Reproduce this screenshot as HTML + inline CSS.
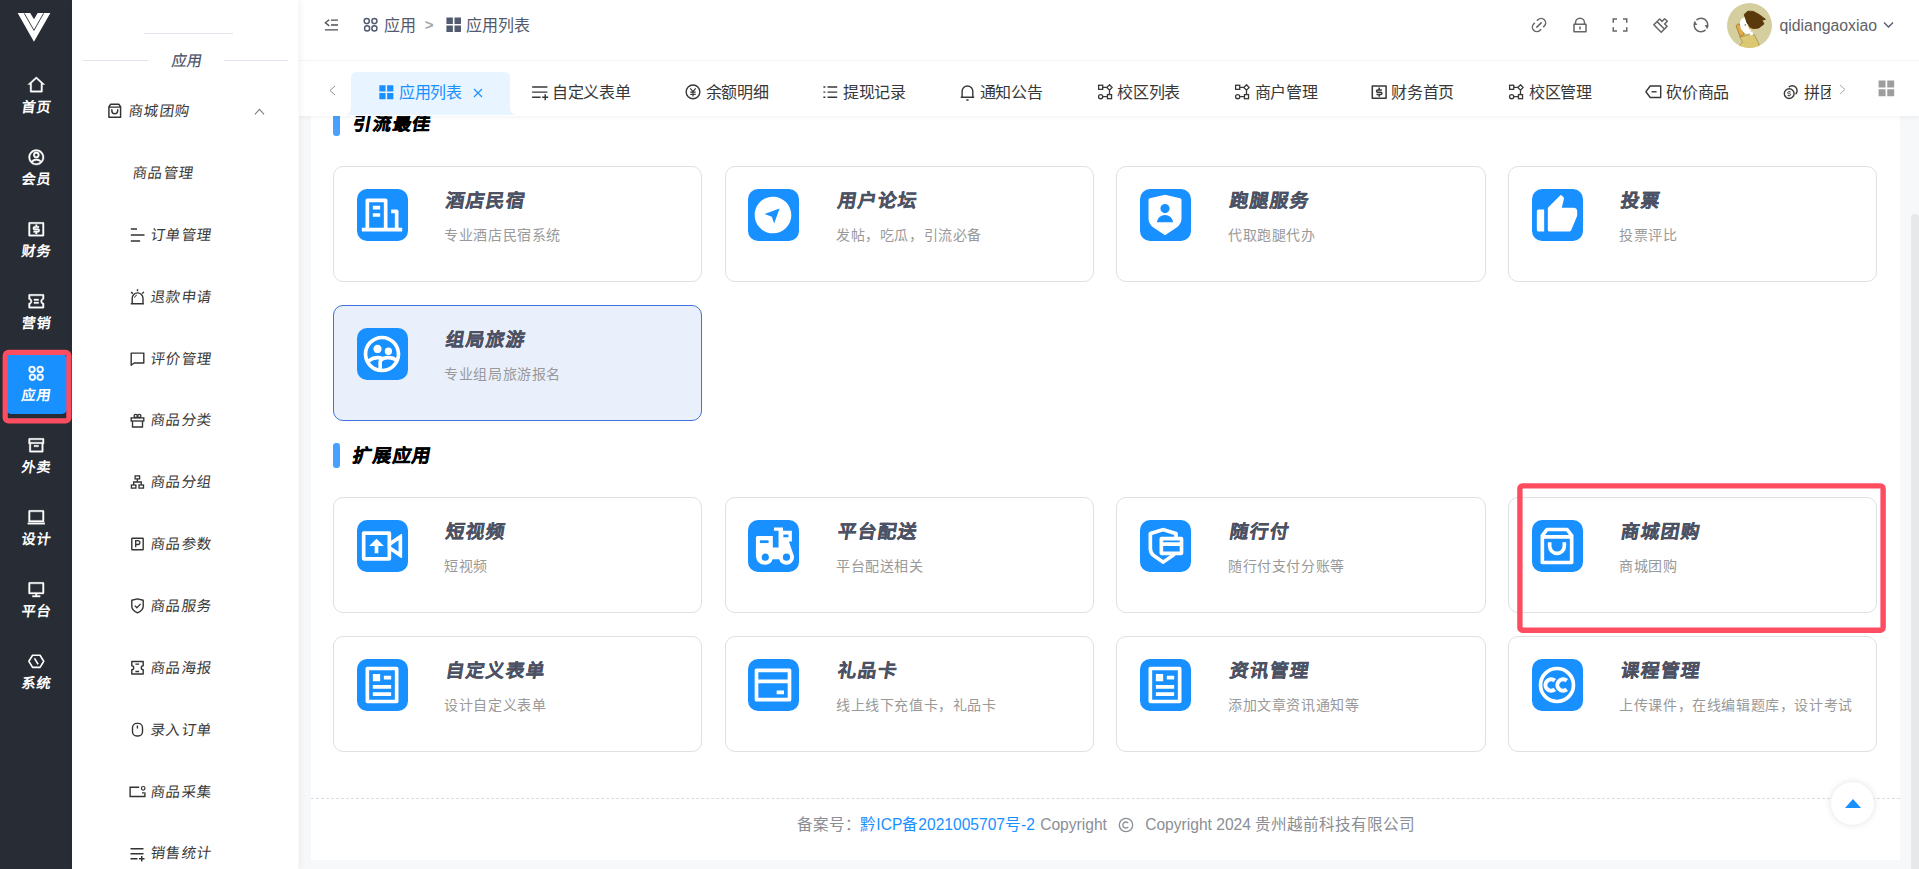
<!DOCTYPE html>
<html lang="zh-CN"><head><meta charset="utf-8"><title>应用列表</title>
<style>
*{box-sizing:border-box;margin:0;padding:0}
html,body{width:1919px;height:869px;overflow:hidden}
body{font-family:"Liberation Sans",sans-serif;background:#f6f8f9;position:relative;color:#333;font-size:14px}
.abs{position:absolute}
svg{display:block;position:absolute}
#col{position:absolute;left:0;top:0;width:72px;height:869px;background:#282c34}
.ci{position:absolute;left:0;width:72px;text-align:center;letter-spacing:1.1px;text-indent:1.1px;color:#fff;font-weight:bold;transform:skewX(-8deg);font-size:14px;line-height:16px;white-space:nowrap}
#side{position:absolute;left:72px;top:0;width:227px;height:869px;background:#fff;border-right:1px solid #f7f8f9;z-index:7;box-shadow:1px 0 7px rgba(0,21,41,.06)}
.mi{position:absolute;font-size:14.5px;transform:skewX(-8deg);letter-spacing:1.2px;color:#3a3a3a;line-height:16px;white-space:nowrap;font-weight:300}
#head{z-index:6;position:absolute;left:298px;top:0;width:1621px;height:61px;background:#fff;border-bottom:1px solid #f3f3f3}
#tabs{z-index:5;position:absolute;left:298px;top:61px;width:1621px;height:55px;background:#fff;box-shadow:0 1px 5px rgba(0,21,41,.06)}
.t16{position:absolute;font-size:16px;line-height:20px;white-space:nowrap}
#panel{overflow:hidden;position:absolute;left:311px;top:115px;width:1589px;height:745px;background:#fff}
.card{position:absolute;width:369px;height:116px;border:1px solid #dee0e6;border-radius:10px;background:#fff}
.card.hov{background:#eaf0fb;border-color:#3f72dc}
.ib{position:absolute;left:23px;top:22px;width:51px;height:52px;border-radius:10px;background:#1890ff}
.ct{position:absolute;left:112px;top:21px;font-size:18.5px;line-height:26px;font-weight:900;transform:skewX(-9deg);transform-origin:0 50%;-webkit-text-stroke:.35px #4c5264;color:#4c5264;white-space:nowrap;letter-spacing:1.1px}
.cd{position:absolute;left:110.3px;top:58px;font-size:14px;letter-spacing:.6px;line-height:20px;color:#999;white-space:nowrap}
.st{position:absolute;font-size:18.3px;line-height:26px;font-weight:900;transform:skewX(-10deg);transform-origin:0 50%;-webkit-text-stroke:.45px #000;color:#000;white-space:nowrap;letter-spacing:1.8px}
.bar{position:absolute;width:7px;height:25px;border-radius:3px;background:#49a0ff}
</style></head><body>
<div id="col">
<svg viewBox="0 0 72 50" width="72" height="50" style="left:0;top:0"><path d="M17.66 13 L30.19 13 L33.96 19.23 L37.69 13 L50.37 13 L33.96 41.75 Z" fill="#fff"/><path d="M24.23 13.3 L33.96 30.36 L43.64 13.3" fill="none" stroke="#282c34" stroke-width="0.9"/></svg>
<svg viewBox="0 0 24 24" width="18.6" height="18.6" fill="#fff" style="stroke:#fff;stroke-width:.45;left:26.700px;top:75.8px"><path d="M19 21H5a1 1 0 0 1-1-1v-9H1l10.327-9.388a1 1 0 0 1 1.346 0L23 11h-3v9a1 1 0 0 1-1 1zM6 19h12V9.157l-6-5.454-6 5.454V19z"/></svg>
<div class="ci" style="top:98.8px">首页</div>
<svg viewBox="0 0 24 24" width="18.6" height="18.6" fill="#fff" style="stroke:#fff;stroke-width:.45;left:26.700px;top:147.8px"><path d="M12 22C6.477 22 2 17.523 2 12S6.477 2 12 2s10 4.477 10 10-4.477 10-10 10zm-4.987-3.744A7.966 7.966 0 0 0 12 20c1.970 0 3.773-.712 5.167-1.892A6.979 6.979 0 0 0 12.160 16a6.981 6.981 0 0 0-5.147 2.256zM5.616 16.820A8.975 8.975 0 0 1 12.160 14a8.972 8.972 0 0 1 6.362 2.634 8 8 0 1 0-12.906.187zM12 13a4 4 0 1 1 0-8 4 4 0 0 1 0 8zm0-2a2 2 0 1 0 0-4 2 2 0 0 0 0 4z"/></svg>
<div class="ci" style="top:170.8px">会员</div>
<svg viewBox="0 0 24 24" width="18.6" height="18.6" fill="#fff" style="stroke:#fff;stroke-width:.45;left:26.700px;top:219.8px"><path d="M3 3h18a1 1 0 0 1 1 1v16a1 1 0 0 1-1 1H3a1 1 0 0 1-1-1V4a1 1 0 0 1 1-1zm1 2v14h16V5H4zm4.500 9H14a.5.5 0 1 0 0-1h-4a2.500 2.500 0 1 1 0-5h1V6h2v2h2.500v2H10a.5.5 0 1 0 0 1h4a2.500 2.500 0 1 1 0 5h-1v2h-2v-2H8.500v-2z"/></svg>
<div class="ci" style="top:242.8px">财务</div>
<svg viewBox="0 0 24 24" width="18.6" height="18.6" fill="#fff" style="stroke:#fff;stroke-width:.45;left:26.700px;top:291.8px"><path d="M2 9.500V4a1 1 0 0 1 1-1h18a1 1 0 0 1 1 1v5.500a2.500 2.500 0 1 0 0 5V20a1 1 0 0 1-1 1H3a1 1 0 0 1-1-1v-5.500a2.500 2.500 0 1 0 0-5zm2-1.532a4.500 4.500 0 0 1 0 8.064V19h16v-2.968a4.500 4.500 0 0 1 0-8.064V5H4v2.968zM9 9h6v2H9V9zm0 4h6v2H9v-2z"/></svg>
<div class="ci" style="top:314.8px">营销</div>
<div class="abs" style="left:6px;top:354px;width:60.5px;height:60px;background:#1890ff;border-radius:5px"></div>
<svg viewBox="0 0 24 24" width="18.6" height="18.6" fill="#fff" style="stroke:#fff;stroke-width:.45;left:26.700px;top:363.8px"><path d="M6.500 11.500a4.500 4.500 0 1 1 0-9 4.500 4.500 0 0 1 0 9zm.5 10a4.500 4.500 0 1 1 0-9 4.500 4.500 0 0 1 0 9zm10-10a4.500 4.500 0 1 1 0-9 4.500 4.500 0 0 1 0 9zm0 10a4.500 4.500 0 1 1 0-9 4.500 4.500 0 0 1 0 9zM6.500 9.500a2.500 2.500 0 1 0 0-5 2.500 2.500 0 0 0 0 5zm.5 10a2.500 2.500 0 1 0 0-5 2.500 2.500 0 0 0 0 5zm10-10a2.500 2.500 0 1 0 0-5 2.500 2.500 0 0 0 0 5zm0 10a2.500 2.500 0 1 0 0-5 2.500 2.500 0 0 0 0 5z"/></svg>
<div class="ci" style="top:386.8px">应用</div>
<svg viewBox="0 0 24 24" width="18.6" height="18.6" fill="#fff" style="stroke:#fff;stroke-width:.45;left:26.700px;top:435.8px"><path d="M3 10H2V4.003C2 3.449 2.455 3 2.992 3h18.016A.99.99 0 0 1 22 4.003V10h-1v10.001a.996.996 0 0 1-.993.999H3.993A.996.996 0 0 1 3 20.001V10zm16 0H5v9h14v-9zM4 5v3h16V5H4zm5 7h6v2H9v-2z"/></svg>
<div class="ci" style="top:458.8px">外卖</div>
<svg viewBox="0 0 24 24" width="18.6" height="18.6" fill="#fff" style="stroke:#fff;stroke-width:.45;left:26.700px;top:507.8px"><path d="M4 5v11h16V5H4zm-2-.993C2 3.451 2.455 3 2.992 3h18.016c.548 0 .992.449.992 1.007V18H2V4.007zM1 19h22v2H1v-2z"/></svg>
<div class="ci" style="top:530.8px">设计</div>
<svg viewBox="0 0 24 24" width="18.6" height="18.6" fill="#fff" style="stroke:#fff;stroke-width:.45;left:26.700px;top:579.8px"><path d="M4 16h16V5H4v11zm9 2v2h4v2H7v-2h4v-2H2.992A.998.998 0 0 1 2 16.993V4.007C2 3.451 2.455 3 2.992 3h18.016c.548 0 .992.449.992 1.007v12.986c0 .556-.455 1.007-.992 1.007H13z"/></svg>
<div class="ci" style="top:602.8px">平台</div>
<svg viewBox="0 0 24 24" width="18.6" height="18.6" fill="#fff" style="stroke:#fff;stroke-width:.45;left:26.700px;top:651.8px"><path d="M7.2 4.2h9.6L21.6 12l-4.8 7.800H7.200L2.400 12z" fill="none" stroke="#fff" stroke-width="2.1" stroke-linejoin="round"/><path d="M9.700 8.200l4.600 7.600" stroke="#fff" stroke-width="2.100" fill="none"/></svg>
<div class="ci" style="top:674.8px">系统</div>
<svg viewBox="0 340 80 90" width="80" height="90" style="left:0;top:340px"><rect x="5.200" y="352.400" width="63.700" height="68.400" rx="3.300" fill="none" stroke="#fe4c61" stroke-width="5.200"/></svg>
</div>
<div id="side">
<div class="abs" style="left:71.5px;top:33px;width:89.5px;height:1px;background:#dfe4ed"></div>
<div class="abs" style="left:11px;top:60px;width:65px;height:1px;background:#dfe4ed"></div>
<div class="abs" style="left:152px;top:60px;width:64px;height:1px;background:#dfe4ed"></div>
<div class="abs" style="left:76.500px;top:50.900px;width:76px;text-align:center;font-size:15px;line-height:20px;transform:skewX(-10deg);color:#465066;-webkit-text-stroke:.2px #465066;letter-spacing:.5px">应用</div>
<svg viewBox="0 0 24 24" width="17.5" height="17.5" fill="#333" style="left:34.15px;top:102.15px"><path d="M6.500 2h11a1 1 0 0 1 .8.400L21 6v15a1 1 0 0 1-1 1H4a1 1 0 0 1-1-1V6l2.700-3.600a1 1 0 0 1 .8-.400zM19 8H5v12h14V8zm-.5-2L17 4H7L5.500 6h13zM9 10v2a3 3 0 0 0 6 0v-2h2v2a5 5 0 0 1-10 0v-2h2z"/></svg>
<svg viewBox="128 226 20 18" width="20" height="18" fill="none" stroke="#333" stroke-width="1.5" style="left:56px;top:226px"><path d="M130.800 229H137M130.800 234.900H144.500M130.800 240.900H140.100"/></svg>
<svg viewBox="128 287 20 20" width="20" height="20" fill="none" stroke="#333" stroke-width="1.4" style="left:56px;top:287px"><path d="M132.200 303.700V298.300a5.400 5.400 0 0 1 10.800 0V303.700M130.800 303.700H143.900M137.500 289.200V291.300M131.100 292.100L132.900 293.600M143.900 292.100L142.200 293.600"/><path d="M134.600 297.600a3 3 0 0 1 2.200-2.500" stroke-width="1"/></svg>
<svg viewBox="128 350 20 18" width="20" height="18" fill="none" stroke="#333" stroke-width="1.4" style="left:56px;top:350px"><path d="M131.200 353.100H143.800V363H134.200L131.200 365.300Z" stroke-linejoin="round"/></svg>
<svg viewBox="128 412 20 18" width="20" height="18" fill="none" stroke="#333" stroke-width="1.35" style="left:56px;top:412px"><rect x="131.200" y="417.900" width="12.600" height="3.100"/><path d="M132.500 421V427H142.500V421"/><circle cx="135.700" cy="415.900" r="1.600"/><circle cx="139.300" cy="415.900" r="1.600"/></svg>
<svg viewBox="128 473 20 18" width="20" height="18" fill="none" stroke="#333" stroke-width="1.3" style="left:56px;top:473px"><rect x="135.100" y="475.900" width="4.500" height="3"/><rect x="131.400" y="485" width="4.500" height="3.100"/><rect x="139" y="485" width="4.500" height="3.100"/><path d="M137.350 479V482M133.650 485V482H141.250V485"/></svg>
<svg viewBox="128 535 20 18" width="20" height="18" fill="none" stroke="#333" stroke-width="1.4" style="left:56px;top:535px"><rect x="131.800" y="538.200" width="11.400" height="11.600" rx=".6"/><path d="M135.700 547.300V540.700H138a1.900 1.900 0 0 1 0 3.800H135.700" stroke-width="1.300"/></svg>
<svg viewBox="128 596 20 20" width="20" height="20" fill="none" stroke="#333" stroke-width="1.4" style="left:56px;top:596px"><path d="M137.500 598.900L143.200 600.300V606.500C143.200 609.400 141 611.200 137.500 612.900C134 611.200 131.800 609.400 131.800 606.500V600.300Z" stroke-linejoin="round"/><path d="M134.800 605.600L136.900 607.700L140.600 603.900" stroke-width="1.300"/></svg>
<svg viewBox="128 658 20 20" width="20" height="20" fill="none" stroke="#333" stroke-width="1.4" style="left:56px;top:658px"><path d="M131.800 661.500H143.200V665.800a1.900 1.900 0 0 0 0 3.800V674H131.800V669.600a1.900 1.900 0 0 0 0-3.800Z" stroke-linejoin="round"/><path d="M135.400 664.100H139.100M135.400 671.500H139.100" stroke-width="1.300"/></svg>
<svg viewBox="128 720 20 20" width="20" height="20" fill="none" stroke="#333" stroke-width="1.4" style="left:56px;top:720px"><rect x="132.500" y="723.400" width="10" height="12.600" rx="4.300"/><path d="M137.400 725.500V728.500"/></svg>
<svg viewBox="127 783 22 18" width="22" height="18" fill="none" stroke="#333" stroke-width="1.4" style="left:55px;top:783px"><path d="M139.200 787.200H130.100V796.500H144.900V792.300M142 792.900H144"/><circle cx="143.200" cy="788.300" r="1.800" stroke-width="1.200"/></svg>
<svg viewBox="128 844 22 20" width="22" height="20" fill="none" stroke="#333" stroke-width="1.45" style="left:56px;top:844px"><path d="M130.500 848.700H143.500M130.500 853.700H143.500M130.500 858.700H137.500M139 858.700H144.500M141.750 856V861.400"/></svg>
<div class="mi" style="left:57.1px;top:103.2px">商城团购</div>
<div class="mi" style="left:60.8px;top:165.1px">商品管理</div>
<div class="mi" style="left:79.3px;top:226.9px">订单管理</div>
<div class="mi" style="left:79.3px;top:288.8px">退款申请</div>
<div class="mi" style="left:79.3px;top:350.6px">评价管理</div>
<div class="mi" style="left:79.3px;top:412.4px">商品分类</div>
<div class="mi" style="left:79.3px;top:474.3px">商品分组</div>
<div class="mi" style="left:79.3px;top:536.1px">商品参数</div>
<div class="mi" style="left:79.3px;top:598.0px">商品服务</div>
<div class="mi" style="left:79.3px;top:659.8px">商品海报</div>
<div class="mi" style="left:79.3px;top:721.7px">录入订单</div>
<div class="mi" style="left:79.3px;top:783.5px">商品采集</div>
<div class="mi" style="left:79.3px;top:845.4px">销售统计</div>
<svg viewBox="0 0 12 8" width="11" height="7.3" fill="none" stroke="#7a7a7a" stroke-width="1.1" style="left:181.700px;top:108px"><path d="M1 7L6 1.500 11 7"/></svg>
</div>
<div id="head">
<svg viewBox="0 0 18 16" width="16" height="14" fill="none" stroke="#4d4f55" stroke-width="1.5" style="left:24.500px;top:18px"><path d="M9 2.500h8M9 8h8M2 13.500h15M7 2L2.500 5.500 7 9"/></svg>
<svg viewBox="0 0 24 24" width="17.5" height="17.5" fill="#515a6e" style="left:64px;top:16.300px"><path d="M6.500 11.500a4.500 4.500 0 1 1 0-9 4.500 4.500 0 0 1 0 9zm.5 10a4.500 4.500 0 1 1 0-9 4.500 4.500 0 0 1 0 9zm10-10a4.500 4.500 0 1 1 0-9 4.500 4.500 0 0 1 0 9zm0 10a4.500 4.500 0 1 1 0-9 4.500 4.500 0 0 1 0 9zM6.500 9.500a2.500 2.500 0 1 0 0-5 2.500 2.500 0 0 0 0 5zm.5 10a2.500 2.500 0 1 0 0-5 2.500 2.500 0 0 0 0 5zm10-10a2.500 2.500 0 1 0 0-5 2.500 2.500 0 0 0 0 5zm0 10a2.500 2.500 0 1 0 0-5 2.500 2.500 0 0 0 0 5z"/></svg>
<div class="t16" style="left:86px;top:15.5px;color:#515a6e">应用</div>
<div class="t16" style="left:126.800px;top:15.300px;color:#a3a6ad;font-weight:bold;font-size:15px">&gt;</div>
<svg viewBox="0 0 24 24" width="19.4" height="19.4" fill="#515a6e" style="left:145.600px;top:15.300px"><path d="M3 3h8v8H3V3zm0 10h8v8H3v-8zM13 3h8v8h-8V3zm0 10h8v8h-8v-8z"/></svg>
<div class="t16" style="left:167.500px;top:15.5px;color:#515a6e">应用列表</div>
<svg viewBox="0 0 24 24" width="18" height="18" fill="#666" style="left:1232.4px;top:16.0px"><path d="M18.364 15.536L16.950 14.120l1.414-1.414a5 5 0 1 0-7.071-7.071L9.879 7.050 8.464 5.636 9.880 4.222a7 7 0 0 1 9.900 9.900l-1.415 1.414zm-2.828 2.828l-1.415 1.414a7 7 0 0 1-9.900-9.900l1.415-1.414L7.050 9.880l-1.414 1.414a5 5 0 1 0 7.071 7.071l1.414-1.414 1.415 1.414zm-.708-10.607l1.415 1.415-7.071 7.070-1.415-1.414 7.071-7.070z"/></svg>
<svg viewBox="0 0 24 24" width="18" height="18" fill="#666" style="left:1273.0px;top:16.0px"><path d="M19 10h1a1 1 0 0 1 1 1v10a1 1 0 0 1-1 1H4a1 1 0 0 1-1-1V11a1 1 0 0 1 1-1h1V9a7 7 0 1 1 14 0v1zM5 12v8h14v-8H5zm6 2h2v4h-2v-4zm6-4V9A5 5 0 0 0 7 9v1h10z"/></svg>
<svg viewBox="0 0 24 24" width="18" height="18" fill="#666" style="left:1313.4px;top:16.1px"><path d="M20 3h2v6h-2V5h-4V3h4zM4 3h4v2H4v4H2V3h2zm16 16v-4h2v6h-6v-2h4zM4 19h4v2H2v-6h2v4z"/></svg>
<svg viewBox="0 0 24 24" width="18" height="18" fill="#666" style="left:1353.7px;top:16.2px"><path d="M16.536 15.950l2.120-2.122-3.180-3.182 3.535-3.535-2.120-2.121-3.536 3.535-3.182-3.182L8.050 7.464l8.486 8.486zm-1.415 1.414L6.636 8.879l-2.828 2.828 8.485 8.485 2.828-2.828zM13.354 5.697l2.828-2.829a1 1 0 0 1 1.414 0l3.536 3.536a1 1 0 0 1 0 1.414l-2.829 2.828 2.475 2.475a1 1 0 0 1 0 1.415L13 22.314a1 1 0 0 1-1.414 0l-9.900-9.900a1 1 0 0 1 0-1.414l7.778-7.778a1 1 0 0 1 1.415 0l2.475 2.475z"/></svg>
<svg viewBox="0 0 24 24" width="18" height="18" fill="#666" style="left:1394.2px;top:16.0px"><path d="M5.463 4.433A9.961 9.961 0 0 1 12 2c5.523 0 10 4.477 10 10 0 2.136-.670 4.116-1.810 5.740L17 12h3A8 8 0 0 0 6.460 6.228l-.997-1.795zm13.074 15.134A9.961 9.961 0 0 1 12 22C6.477 22 2 17.523 2 12c0-2.136.670-4.116 1.810-5.740L7 12H4a8 8 0 0 0 13.540 5.772l.997 1.795z"/></svg>
<svg viewBox="0 0 45 45" width="45" height="45" style="left:1429.2px;top:2.900px"><defs><clipPath id="av"><circle cx="22.5" cy="22.500" r="22.500"/></clipPath></defs><g clip-path="url(#av)"><rect width="45" height="45" fill="#d5cf9f"/><path d="M12.600 34.200L21.500 31.800 27.500 31.800 32.300 42 30 46 12 46 12.600 42.600 15.600 39z" fill="#dcc873" stroke="#8a6a1c" stroke-width=".5"/><path d="M9 22.800Q10.500 20.500 12.600 21L17.300 31.200 13.200 33.600z" fill="#e0ac4a" stroke="#8a5a14" stroke-width=".6"/><ellipse cx="18.600" cy="22.800" rx="5.400" ry="8.200" transform="rotate(-18 18.600 22.800)" fill="#fff"/><path d="M21 23l5 2.800-3.500.700z" fill="#d9a441"/><path d="M22.100 29.400l3.300-.8.800 3.200-2.800 .900z" fill="#fff"/><path d="M17.200 11.400L20.900 8.200 26.300 8.400 32.300 11.700 38.400 16.300 35 17.200 36.900 21 31.700 25 26.300 25.600 22.600 23.800 19.900 19.500 18.400 14.800z" fill="#5a3a0c" stroke="#5a3a0c" stroke-width="1" stroke-linejoin="round"/><circle cx="18.300" cy="21.900" r=".7" fill="#5a3a0c"/></g></svg>
<div class="t16" style="left:1481.500px;top:15.500px;color:#606266;font-size:15.800px">qidiangaoxiao</div>
<svg viewBox="0 0 11 8" width="11" height="8" fill="none" stroke="#515a6e" stroke-width="1.3" style="left:1584.700px;top:20.700px"><path d="M1 1.500l4.500 4.500L10 1.500"/></svg>
</div>
<div id="tabs">
<svg viewBox="0 0 7 11" width="7" height="11" fill="none" stroke="#8a8f99" stroke-width="1" style="left:31px;top:24px"><path d="M6 1L1 5.500 6 10"/></svg>
<svg viewBox="0 0 173 43" width="173" height="43" style="left:46.200px;top:11px;overflow:visible"><path d="M-.5 43 C4.500 43 7 40 7 34 L7 6 Q7 0 13 0 L160 0 Q166 0 166 6 L166 34 C166 40 168.500 43 173.500 43 Z" fill="#e8f4ff"/></svg>
<svg viewBox="0 0 24 24" width="18.7" height="18.7" fill="#1890ff" style="left:79.200px;top:21.700px"><path d="M3 3h8v8H3V3zm0 10h8v8H3v-8zM13 3h8v8h-8V3zm0 10h8v8h-8v-8z"/></svg>
<div class="t16" style="left:101.100px;top:21.500px;color:#1890ff;letter-spacing:-.3px">应用列表</div>
<svg viewBox="0 0 10 10" width="10" height="10" fill="none" stroke="#1890ff" stroke-width="1.1" style="left:174.700px;top:26.800px"><path d="M1 1l8 8M9 1L1 9"/></svg>
<svg viewBox="530 83 20 20" width="20" height="20" fill="none" stroke="#383838" stroke-width="1.45" style="left:232px;top:22px"><path d="M532.100 86.900H547.400M532.100 92.100H547.400M532.100 97.300H540.600M542.200 97.300H548.200M545.200 94.300V100.300"/></svg>
<svg viewBox="683 82 20 20" width="20" height="20" fill="none" stroke="#383838" stroke-width="1.4" style="left:385px;top:21px"><circle cx="693" cy="91.900" r="6.850"/><path d="M690.300 88.300L693 91.700L695.700 88.300M690.300 92.100H695.700M690.300 94.300H695.700M693 91.700V96.600" stroke-width="1.150"/></svg>
<svg viewBox="821 83 20 20" width="20" height="20" fill="none" stroke="#383838" stroke-width="1.45" style="left:523px;top:22px"><path d="M827.500 86.900H837.200M827.500 92.100H837.200M827.500 97.200H837.200M823.400 86.900H825.400M823.400 92.100H825.400M823.400 97.200H825.400"/></svg>
<svg viewBox="958 82 20 20" width="20" height="20" fill="none" stroke="#383838" stroke-width="1.4" style="left:660px;top:21px"><path d="M962.100 97.300V91.300a5.350 5.350 0 0 1 10.700 0V97.300M960.700 97.300H974.200M966.300 100H968.600"/></svg>
<svg viewBox="1096.8 84.1 16 16" width="16" height="16" fill="none" stroke="#383838" stroke-width="1.3" style="left:798.8px;top:23.1px"><rect x="1098.4" y="85.35" width="4.100" height="4.100"/><path d="M1109.3 84.9l2.700 2.700-2.700 2.700-2.700-2.700z"/><circle cx="1100.45" cy="96.75" r="2.100"/><rect x="1107.25" y="94.7" width="4.100" height="4.100"/><path d="M1102.5 87.4H1106.6M1102.55 96.75H1107.25M1109.3 90.3V94.7"/></svg>
<svg viewBox="1234 84.1 16 16" width="16" height="16" fill="none" stroke="#383838" stroke-width="1.3" style="left:936px;top:23.1px"><rect x="1235.6" y="85.35" width="4.100" height="4.100"/><path d="M1246.5 84.9l2.700 2.700-2.700 2.700-2.700-2.700z"/><circle cx="1237.65" cy="96.75" r="2.100"/><rect x="1244.45" y="94.7" width="4.100" height="4.100"/><path d="M1239.7 87.4H1243.8M1239.75 96.75H1244.45M1246.5 90.3V94.7"/></svg>
<svg viewBox="1508.3 84.1 16 16" width="16" height="16" fill="none" stroke="#383838" stroke-width="1.3" style="left:1210.3px;top:23.1px"><rect x="1509.9" y="85.35" width="4.100" height="4.100"/><path d="M1520.8 84.9l2.700 2.700-2.700 2.700-2.700-2.700z"/><circle cx="1511.95" cy="96.75" r="2.100"/><rect x="1518.75" y="94.7" width="4.100" height="4.100"/><path d="M1514 87.4H1518.1M1514.05 96.75H1518.75M1520.8 90.3V94.7"/></svg>
<svg viewBox="0 0 24 24" width="18.4" height="18.4" fill="#383838" style="left:1072.2px;top:21.6px"><path d="M3 3h18a1 1 0 0 1 1 1v16a1 1 0 0 1-1 1H3a1 1 0 0 1-1-1V4a1 1 0 0 1 1-1zm1 2v14h16V5H4zm4.500 9H14a.5.5 0 1 0 0-1h-4a2.500 2.500 0 1 1 0-5h1V6h2v2h2.500v2H10a.5.5 0 1 0 0 1h4a2.500 2.500 0 1 1 0 5h-1v2h-2v-2H8.500v-2z"/></svg>
<svg viewBox="1643 82 20 20" width="20" height="20" fill="none" stroke="#383838" stroke-width="1.4" style="left:1345px;top:21px"><path d="M1645.900 91.760L1650.200 86H1660.700V97.500H1650.200Z" stroke-linejoin="round"/><path d="M1651.600 91.760H1656.600"/></svg>
<svg viewBox="1781 82 20 20" width="20" height="20" fill="none" stroke="#383838" stroke-width="1.4" style="left:1483px;top:21px"><circle cx="1789.200" cy="93.600" r="4.900"/><path d="M1788.800 87.200A4.800 4.800 0 1 1 1795.600 94.200"/><path d="M1790.700 91.900H1788.500a.9.900 0 0 0 0 1.800h1.300a.9.900 0 0 1 0 1.800H1787.600M1789.200 90.900V91.900M1789.200 95.500V96.400" stroke-width=".9"/></svg>
<div class="t16" style="left:254.0px;top:21.500px;color:#383838;letter-spacing:-.3px">自定义表单</div>
<div class="t16" style="left:407.5px;top:21.500px;color:#383838;letter-spacing:-.3px">余额明细</div>
<div class="t16" style="left:544.9px;top:21.500px;color:#383838;letter-spacing:-.3px">提现记录</div>
<div class="t16" style="left:681.8px;top:21.500px;color:#383838;letter-spacing:-.3px">通知公告</div>
<div class="t16" style="left:819.2px;top:21.500px;color:#383838;letter-spacing:-.3px">校区列表</div>
<div class="t16" style="left:956.6px;top:21.500px;color:#383838;letter-spacing:-.3px">商户管理</div>
<div class="t16" style="left:1093.2px;top:21.500px;color:#383838;letter-spacing:-.3px">财务首页</div>
<div class="t16" style="left:1230.9px;top:21.500px;color:#383838;letter-spacing:-.3px">校区管理</div>
<div class="t16" style="left:1368.4px;top:21.500px;color:#383838;letter-spacing:-.3px">砍价商品</div>
<div class="t16" style="left:1506.0px;top:21.500px;color:#383838;width:26.500px;overflow:hidden">拼团</div>
<svg viewBox="0 0 7 11" width="7" height="11" fill="none" stroke="#a5a9b0" stroke-width="1" style="left:1540.500px;top:23.300px"><path d="M1 1l5 4.500L1 10"/></svg>
<svg viewBox="0 0 24 24" width="20.8" height="20.8" fill="#9d9d9d" style="left:1577.800px;top:16.600px"><path d="M3 3h8v8H3V3zm0 10h8v8H3v-8zM13 3h8v8h-8V3zm0 10h8v8h-8v-8z"/></svg>
</div>
<div id="panel">
<div class="bar" style="left:22px;top:-4px"></div>
<div class="st" style="left:41.700px;top:-4.200px">引流最佳</div>
<div class="card" style="left:22px;top:51px">
<div class="ib" style="left:23px"><svg viewBox="0 0 24 24" width="44" height="44" fill="#fff" style="left:3.3px;top:3.7px"><path d="M21 19h2v2H1v-2h2V4a1 1 0 0 1 1-1h10a1 1 0 0 1 1 1v15h4v-8h-2V9h3a1 1 0 0 1 1 1v9zM5 5v14h8V5H5zm2 6h4v2H7v-2zm0-4h4v2H7V7z"/></svg></div>
<div class="ct" style="left:112px">酒店民宿</div><div class="cd" style="left:110.3px">专业酒店民宿系统</div></div>
<div class="card" style="left:414px;top:51px">
<div class="ib" style="left:22px"><svg viewBox="0 0 24 24" width="44" height="44" fill="#fff" style="left:3.3px;top:3.7px"><path d="M12 22C6.477 22 2 17.523 2 12S6.477 2 12 2s10 4.477 10 10-4.477 10-10 10zm3.600-13.540L7.400 11.470l3.980 1.420 1.240 3.760 2.980-8.190z"/></svg></div>
<div class="ct" style="left:112px">用户论坛</div><div class="cd" style="left:110px">发帖，吃瓜，引流必备</div></div>
<div class="card" style="left:805px;top:51px;width:370px">
<div class="ib" style="left:23px"><svg viewBox="0 0 24 24" width="44" height="44" fill="#fff" style="left:3.3px;top:3.7px"><path d="M3.783 2.826L12 1l8.217 1.826a1 1 0 0 1 .783.976v9.987a6 6 0 0 1-2.672 4.992L12 23l-6.328-4.219A6 6 0 0 1 3 13.790V3.802a1 1 0 0 1 .783-.976zM12 11a2.500 2.500 0 1 0 0-5 2.500 2.500 0 0 0 0 5zm-4.473 5h8.946a4.500 4.500 0 0 0-8.946 0z"/></svg></div>
<div class="ct" style="left:112.7px">跑腿服务</div><div class="cd" style="left:111px">代取跑腿代办</div></div>
<div class="card" style="left:1197px;top:51px">
<div class="ib" style="left:23px"><svg viewBox="0 0 24 24" width="44" height="44" fill="#fff" style="left:3.3px;top:3.7px"><path d="M2 9h3v12H2a1 1 0 0 1-1-1V10a1 1 0 0 1 1-1zm5.293-1.293l6.400-6.400a.5.5 0 0 1 .654-.047l.853.640a1.500 1.500 0 0 1 .553 1.570L14.600 8H21a2 2 0 0 1 2 2v2.104a2 2 0 0 1-.150.762l-3.095 7.515a1 1 0 0 1-.925.619H8a1 1 0 0 1-1-1V8.414a1 1 0 0 1 .293-.707z"/></svg></div>
<div class="ct" style="left:112px">投票</div><div class="cd" style="left:110.3px">投票评比</div></div>
<div class="card hov" style="left:22px;top:190px">
<div class="ib" style="left:23px"><svg viewBox="0 0 24 24" width="44" height="44" fill="#fff" style="left:3.3px;top:3.7px"><path d="M9.550 11.500a2.250 2.250 0 1 1 0-4.500 2.250 2.250 0 0 1 0 4.500zm.450 8.248V16.400c0-.488.144-.937.404-1.338a6.473 6.473 0 0 0-5.033 1.417A8.012 8.012 0 0 0 10 19.749zM4.453 14.660A8.462 8.462 0 0 1 9.500 13c1.043 0 2.043.188 2.967.532.878-.343 1.925-.532 3.033-.532 1.660 0 3.185.424 4.206 1.156a8 8 0 1 0-15.253.504zm14.426 1.426C18.486 15.553 17.171 15 15.500 15c-2.006 0-3.500.797-3.500 1.400V20a7.996 7.996 0 0 0 6.880-3.914zM12 22C6.477 22 2 17.523 2 12S6.477 2 12 2s10 4.477 10 10-4.477 10-10 10zm3.500-9.500a2 2 0 1 1 0-4 2 2 0 0 1 0 4z"/></svg></div>
<div class="ct" style="left:112px">组局旅游</div><div class="cd" style="left:110.3px">专业组局旅游报名</div></div>
<div class="bar" style="left:22px;top:328px"></div>
<div class="st" style="left:41.700px;top:327.800px">扩展应用</div>
<div class="card" style="left:22px;top:382px">
<div class="ib" style="left:23px"><svg viewBox="0 0 24 24" width="44" height="44" fill="#fff" style="left:3.3px;top:3.7px"><path d="M16 4a1 1 0 0 1 1 1v4.200l5.213-3.650a.5.5 0 0 1 .787.410v12.080a.5.5 0 0 1-.787.410L17 14.800V19a1 1 0 0 1-1 1H2a1 1 0 0 1-1-1V5a1 1 0 0 1 1-1h14zm-1 2H3v12h12V6zM9 8l4 4h-3v4H8v-4H5l4-4zm12 .841l-4 2.800v.718l4 2.800V8.840z"/></svg></div>
<div class="ct" style="left:112px">短视频</div><div class="cd" style="left:110.3px">短视频</div></div>
<div class="card" style="left:414px;top:382px">
<div class="ib" style="left:22px"><svg viewBox="112 112 643 640" width="51" height="52" style="left:0;top:0"><path d="M232 305H425V450H497V240H440V200H553V240H665V375H628L692 560V573A95 95 0 0 1 597 668A95 95 0 0 1 505 600H422A95 95 0 0 1 330 668Q225 668 212 560V325Q212 305 232 305Z" fill="#fff"/><circle cx="330" cy="573" r="45" fill="#1890ff"/><circle cx="597" cy="573" r="45" fill="#1890ff"/><rect x="262" y="360" width="110" height="35" fill="#1890ff"/><rect x="558" y="288" width="64" height="34" fill="#1890ff"/></svg></div>
<div class="ct" style="left:112px">平台配送</div><div class="cd" style="left:110px">平台配送相关</div></div>
<div class="card" style="left:805px;top:382px;width:370px">
<div class="ib" style="left:23px"><svg viewBox="0 0 24 24" width="44" height="44" fill="#fff" style="left:3.3px;top:3.7px"><path d="M11 2l7.298 2.280a1 1 0 0 1 .702.955V7h2a1 1 0 0 1 1 1v8a1 1 0 0 1-1 1l-3.220.001c-.387.510-.857.960-1.400 1.330L11 22l-5.380-3.668A6 6 0 0 1 3 13.374V5.235a1 1 0 0 1 .702-.954L11 2zm0 2.094L5 5.970v7.404a4 4 0 0 0 1.558 3.169l.189.136L11 19.580 14.782 17H10a1 1 0 0 1-1-1V8a1 1 0 0 1 1-1h7V5.970l-6-1.876zM11 12v3h9v-3h-9zm0-2h9V9h-9v1z"/></svg></div>
<div class="ct" style="left:112.7px">随行付</div><div class="cd" style="left:111px">随行付支付分账等</div></div>
<div class="card" style="left:1197px;top:382px">
<div class="ib" style="left:23px"><svg viewBox="0 0 24 24" width="44" height="44" fill="#fff" style="left:3.3px;top:3.7px"><path d="M6.500 2h11a1 1 0 0 1 .8.400L21 6v15a1 1 0 0 1-1 1H4a1 1 0 0 1-1-1V6l2.700-3.600a1 1 0 0 1 .8-.400zM19 8H5v12h14V8zm-.5-2L17 4H7L5.500 6h13zM9 10v2a3 3 0 0 0 6 0v-2h2v2a5 5 0 0 1-10 0v-2h2z"/></svg></div>
<div class="ct" style="left:112px">商城团购</div><div class="cd" style="left:110.3px">商城团购</div></div>
<div class="card" style="left:22px;top:521px">
<div class="ib" style="left:23px"><svg viewBox="0 0 24 24" width="44" height="44" fill="#fff" style="left:3.3px;top:3.7px"><path d="M20 22H4a1 1 0 0 1-1-1V3a1 1 0 0 1 1-1h16a1 1 0 0 1 1 1v18a1 1 0 0 1-1 1zm-1-2V4H5v16h14zM7 6h4v4H7V6zm0 6h10v2H7v-2zm0 4h10v2H7v-2zm6-9h4v2h-4V7z"/></svg></div>
<div class="ct" style="left:112px">自定义表单</div><div class="cd" style="left:110.3px">设计自定义表单</div></div>
<div class="card" style="left:414px;top:521px">
<div class="ib" style="left:22px"><svg viewBox="0 0 24 24" width="44" height="44" fill="#fff" style="left:3.3px;top:3.7px"><path d="M3 3h18a1 1 0 0 1 1 1v16a1 1 0 0 1-1 1H3a1 1 0 0 1-1-1V4a1 1 0 0 1 1-1zm17 8H4v8h16v-8zm0-2V5H4v4h16zm-6 6h4v2h-4v-2z"/></svg></div>
<div class="ct" style="left:112px">礼品卡</div><div class="cd" style="left:110px">线上线下充值卡，礼品卡</div></div>
<div class="card" style="left:805px;top:521px;width:370px">
<div class="ib" style="left:23px"><svg viewBox="0 0 24 24" width="44" height="44" fill="#fff" style="left:3.3px;top:3.7px"><path d="M20 22H4a1 1 0 0 1-1-1V3a1 1 0 0 1 1-1h16a1 1 0 0 1 1 1v18a1 1 0 0 1-1 1zm-1-2V4H5v16h14zM7 6h4v4H7V6zm0 6h10v2H7v-2zm0 4h10v2H7v-2zm6-9h4v2h-4V7z"/></svg></div>
<div class="ct" style="left:112.7px">资讯管理</div><div class="cd" style="left:111px">添加文章资讯通知等</div></div>
<div class="card" style="left:1197px;top:521px">
<div class="ib" style="left:23px"><svg viewBox="0 0 24 24" width="44" height="44" fill="none" stroke="#fff" stroke-width="2" style="left:3.3px;top:3.7px"><circle cx="12" cy="12" r="9"/><path d="M10.800 9.630a3.100 3.100 0 1 0 0 4.740M17.300 9.630a3.100 3.100 0 1 0 0 4.740" stroke-width="2.200"/></svg></div>
<div class="ct" style="left:112px">课程管理</div><div class="cd" style="left:110.3px">上传课件，在线编辑题库，设计考试</div></div>
<svg viewBox="1510 476 384 164" width="384" height="164" style="left:1199px;top:361px"><rect x="1519.900" y="485.900" width="363.200" height="144.300" rx="2.600" fill="none" stroke="#fe4c61" stroke-width="5.400"/></svg>
<div class="abs" style="left:0;top:682.500px;width:1589px;height:0;border-top:1px dashed #dcdcdc"></div>
<div class="t16" style="left:486.0px;top:700px;color:#8b8e94;font-size:15.600px">备案号：</div>
<div class="t16" style="left:549.3px;top:700px;color:#1890ff;font-size:15.600px">黔ICP备2021005707号-2</div>
<div class="t16" style="left:729.2px;top:700px;color:#8b8e94;font-size:15.600px">Copyright</div>
<svg viewBox="0 0 16 16" width="16" height="16" fill="none" stroke="#8b8e94" stroke-width="1.3" style="left:807.0px;top:702px"><circle cx="8" cy="8" r="6.700"/><path d="M10.300 6.200a3 3 0 1 0 0 3.600"/></svg>
<div class="t16" style="left:834.2px;top:700px;color:#8b8e94;font-size:15.600px">Copyright 2024 贵州越前科技有限公司</div>
<div class="abs" style="left:1519.8px;top:666.9px;width:43px;height:43px;border-radius:50%;background:#fff;box-shadow:0 0 7px rgba(0,0,0,.12)"></div>
<svg viewBox="0 0 16 9" width="16" height="9" style="left:1533.5px;top:684.0px"><path d="M8 0l8 9H0z" fill="#1890ff"/></svg>
</div>
<div class="abs" style="left:1911px;top:214px;width:8px;height:655px;background:#e8e8e8;border-radius:4px 4px 0 0"></div>
</body></html>
